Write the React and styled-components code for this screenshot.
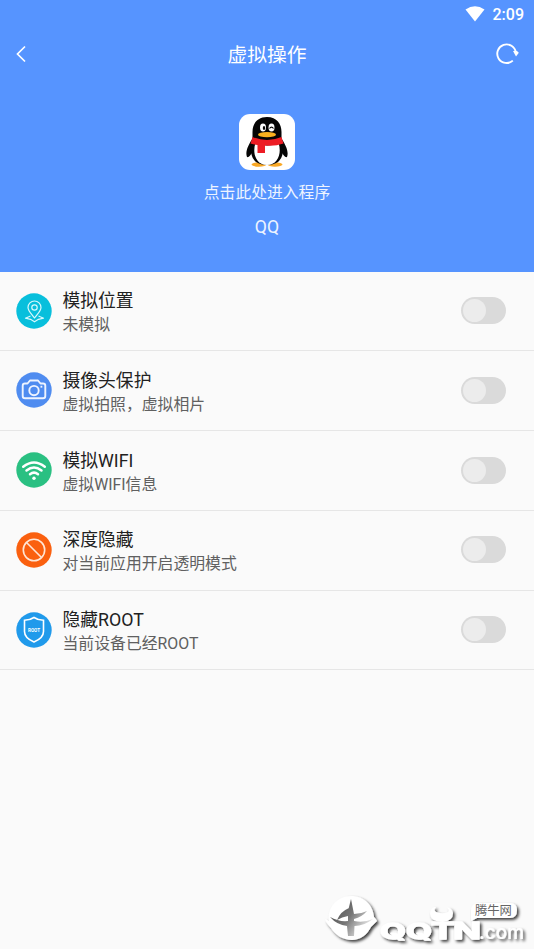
import React from 'react';
import styled, { createGlobalStyle } from 'styled-components';

const GlobalStyle = createGlobalStyle`
  * {
    box-sizing: border-box;
  }

  body {
    margin: 0;
    background: #fafafa;
    font-family: Roboto, 'Noto Sans CJK SC', sans-serif;
  }
`;

const Screen = styled.div`
  position: relative;
  height: 949px;
  overflow: hidden;
  background: #fafafa;
`;

const Header = styled.header`
  height: 271.7px;
  background: #5694ff;
  color: white;
`;

const StatusBar = styled.div`
  display: flex;
  justify-content: flex-end;
  align-items: center;
  gap: 8px;
  height: 27px;
  padding-right: 10px;
`;

const Clock = styled.span`
  font-size: 16px;
  line-height: 27px;
  font-weight: 500;
  padding-top: 1px;
`;

const NavBar = styled.div`
  display: flex;
  justify-content: space-between;
  align-items: center;
  height: 54px;
  padding: 0 14px;
`;

const IconButton = styled.button`
  display: flex;
  width: 26px;
  height: 26px;
  padding: 0;
  border: none;
  background: none;
`;

const Title = styled.h1`
  margin: 0;
  padding-top: 4px;
  font-size: 19.8px;
  line-height: 30px;
  font-weight: 400;
`;

const AppEntry = styled.div`
  display: flex;
  flex-direction: column;
  align-items: center;
  padding-top: 32.5px;
`;

const AppIcon = styled.svg`
  display: block;
  width: 56px;
  height: 56px;
`;

const EntryText = styled.div`
  margin-top: ${(props) => props.$top}px;
  font-size: ${(props) => props.$size}px;
  line-height: 24px;
  color: #eef4ff;
`;

const Row = styled.div`
  display: flex;
  align-items: center;
  height: 79.75px;
  padding: 0 28px 1px 16px;
  border-bottom: 1px solid #e6e6e6;
`;

const RowIcon = styled.svg`
  flex: none;
  width: 36px;
  height: 36px;
`;

const RowText = styled.div`
  flex: 1;
  padding: 4px 0 0 10.5px;
`;

const RowTitle = styled.div`
  font-size: 17.8px;
  line-height: 24px;
  color: #212121;
`;

const RowDetail = styled.div`
  font-size: 15.85px;
  line-height: 23px;
  color: #606060;
`;

const Switch = styled.button`
  display: flex;
  align-items: center;
  width: 45px;
  height: 27px;
  padding: 0 2px;
  border: none;
  border-radius: 14px;
  background: #dadada;
`;

const Knob = styled.span`
  width: 23px;
  height: 23px;
  border-radius: 50%;
  background: #ececec;
`;

const Watermark = styled.svg`
  position: absolute;
  right: 0;
  bottom: 0;
  width: 220px;
  height: 64px;
`;

const Penguin = () => (
  <AppIcon viewBox="0 0 56 56">
    <rect width="56" height="56" rx="11" fill="#fff" />
    <ellipse cx="20" cy="50.5" rx="7.5" ry="2.2" fill="#f9a825" />
    <ellipse cx="36" cy="50.5" rx="7.5" ry="2.2" fill="#f9a825" />
    <path d="M14 24C9 31 6 38 8 43C10 44 13 39 14 37ZM42 24C47 31 50 38 48 43C46 44 43 39 42 37Z" fill="#050505" />
    <path d="M28 3C18 3 13.500 10 13.500 18V25C11 34 11 43 17 48C23 52 33 52 39 48C45 43 45 34 42.500 25V18C42.500 10 38 3 28 3Z" fill="#050505" />
    <path d="M16.500 29Q28 34 39.500 29C43 39 39 51 28 51C17 51 13 39 16.500 29Z" fill="#fff" />
    <ellipse cx="24" cy="13.500" rx="3" ry="4" fill="#fff" />
    <ellipse cx="32.500" cy="13.500" rx="3" ry="4" fill="#fff" />
    <ellipse cx="25" cy="14" rx="1.200" ry="1.900" fill="#050505" />
    <path d="M30.500 14.500Q32.500 11.800 34.500 14.500" fill="none" stroke="#050505" strokeWidth="1.200" />
    <ellipse cx="28" cy="20.700" rx="9" ry="2.600" fill="#f9b01e" />
    <path d="M13.500 23Q28 29 42.500 23L44.500 29.500Q36 32.500 26 31.500V39H18.500V31Q15 30.500 11.500 29.500Z" fill="#ed1c24" />
  </AppIcon>
);

const LocationIcon = () => (
  <RowIcon viewBox="0 0 36 36">
    <circle cx="18" cy="18" r="17.700" fill="#08bfdc" />
    <g fill="none" stroke="#d9f8fc" strokeWidth="1.200" strokeLinejoin="round">
      <path d="M18.500 25C16 21.500 12 18 12 14.500A6.500 6.500 0 0 1 25 14.500C25 18 21 21.500 18.500 25Z" />
      <circle cx="18.500" cy="14.500" r="2.700" />
      <path d="M14.500 23L9.500 25.200L14.500 26.300L18.500 28.800L22.500 26.300L27.500 25.200L22.500 23" />
    </g>
  </RowIcon>
);

const CameraIcon = () => (
  <RowIcon viewBox="0 0 36 36">
    <circle cx="18" cy="18" r="17.700" fill="#4f8cf0" />
    <g fill="none" stroke="#eef4ff" strokeWidth="1.900" strokeLinejoin="round">
      <path d="M9 11.500H11.500L14 8.500H22L24.500 11.500H27Q29.300 11.500 29.300 13.800V24Q29.300 26.300 27 26.300H9Q6.700 26.300 6.700 24V13.800Q6.700 11.500 9 11.500Z" />
      <circle cx="18" cy="18.600" r="4.700" />
      <path d="M24.500 14.700H26.300" />
    </g>
  </RowIcon>
);

const WifiIcon = () => (
  <RowIcon viewBox="0 0 36 36">
    <circle cx="18" cy="18" r="17.700" fill="#2ac082" />
    <g fill="none" stroke="#fff" strokeWidth="2.500" strokeLinecap="round">
      <path d="M7.200 14.700Q18 6.200 28.800 14.700" />
      <path d="M10.500 18.500Q18 12.600 25.500 18.500" />
      <path d="M14 22.200Q18 19.100 22 22.200" />
    </g>
    <circle cx="18" cy="26.200" r="1.700" fill="#fff" />
  </RowIcon>
);

const HiddenIcon = () => (
  <RowIcon viewBox="0 0 36 36">
    <circle cx="18" cy="18" r="17.700" fill="#fa600f" />
    <g fill="none" stroke="#ffe6d5" strokeWidth="1.600">
      <circle cx="18" cy="18" r="10.700" />
      <path d="M10.500 10.500L25.500 25.500" />
    </g>
  </RowIcon>
);

const RootIcon = () => (
  <RowIcon viewBox="0 0 36 36">
    <circle cx="18" cy="18" r="17.700" fill="#209aeb" />
    <path
      d="M18 5.500Q22 8.200 27.500 8.200V19.500Q27.500 26 18 30Q8.500 26 8.500 19.500V8.200Q14 8.200 18 5.500Z"
      fill="none"
      stroke="#fff"
      strokeWidth="1.600"
    />
    <text x="18" y="19.700" fontSize="5" fontWeight="700" fill="#fff" textAnchor="middle" textLength="12" lengthAdjust="spacingAndGlyphs">
      ROOT
    </text>
  </RowIcon>
);

const SiteMark = () => (
  <Watermark viewBox="0 0 220 64">
    <defs>
      <filter id="shade" x="-10%" y="-20%" width="125%" height="150%">
        <feDropShadow dx="2" dy="2" stdDeviation="1.800" floodColor="#000" floodOpacity="0.75" />
      </filter>
      <filter id="soft">
        <feGaussianBlur stdDeviation="0.700" />
      </filter>
      <linearGradient id="hollow" x1="0" y1="0" x2="1" y2="0.600">
        <stop offset="0" stopColor="#444" />
        <stop offset="0.550" stopColor="#777" />
        <stop offset="1" stopColor="#eee" />
      </linearGradient>
    </defs>
    <g filter="url(#shade)" fill="#fff">
      <path d="M37 11C50 11 59 20 60 32Q62 34 63 36Q59 40 57 42C53 50 46 55 38 55C29 55 21 50 17 43Q12 38 11 34L15 36C13 22 24 11 37 11Z" />
      <path
        fillRule="evenodd"
        d="M120 22Q116 24 116 29Q117 37 129 37Q139 36 139 28Q138 23 133 22.500Q136 25 134 27Q129 29.500 122 27Q119 25 122 22Z"
      />
      <g fontFamily="Inter, sans-serif" fontSize="23" fontWeight="700" stroke="#fff" strokeWidth="1.400" strokeLinejoin="round">
        <text x="66" y="54" fontSize="22" textLength="52" lengthAdjust="spacingAndGlyphs">
          QQ
        </text>
        <text x="117" y="54" textLength="24" lengthAdjust="spacingAndGlyphs">
          T
        </text>
        <text x="139" y="54" textLength="28" lengthAdjust="spacingAndGlyphs">
          N
        </text>
      </g>
      <text x="165" y="54" fontFamily="Inter, sans-serif" fontSize="19" fontWeight="500" textLength="45" lengthAdjust="spacingAndGlyphs">
        .com
      </text>
      <path d="M165 18H196Q203 18 203 25Q203 33 196 33H163L157 36V26Q157 18 165 18Z" />
    </g>
    <path
      filter="url(#soft)"
      fill="url(#hollow)"
      d="M37 14L40 29Q47 29 53 26Q48 32 40 34V36Q50 38 59 34Q50 41 40.500 41L40 51H34L33 41Q23 40 16 32Q25 37 34 36V31Q28 32 23 35Q27 26 35 23L33.500 28Z"
    />
    <text x="161" y="30" fontFamily="'Noto Sans CJK SC', sans-serif" fontSize="12.300" fill="#666">
      腾牛网
    </text>
  </Watermark>
);

const items = [
  { title: '模拟位置', detail: '未模拟', Icon: LocationIcon },
  { title: '摄像头保护', detail: '虚拟拍照，虚拟相片', Icon: CameraIcon },
  { title: '模拟WIFI', detail: '虚拟WIFI信息', Icon: WifiIcon },
  { title: '深度隐藏', detail: '对当前应用开启透明模式', Icon: HiddenIcon },
  { title: '隐藏ROOT', detail: '当前设备已经ROOT', Icon: RootIcon },
];

const App = () => (
  <>
    <GlobalStyle />
    <Screen>
      <Header>
        <StatusBar>
          <svg width="20" height="16" viewBox="0 0 20 16">
            <path d="M0.500 3.500Q10 -3 19.500 3.500L10 15.500Z" fill="#fff" />
          </svg>
          <Clock>2:09</Clock>
        </StatusBar>
        <NavBar>
          <IconButton>
            <svg width="26" height="26" viewBox="0 0 26 26">
              <path d="M11 5.500L3.500 13L11 20.500" fill="none" stroke="#fff" strokeWidth="1.700" />
            </svg>
          </IconButton>
          <Title>虚拟操作</Title>
          <IconButton>
            <svg width="26" height="26" viewBox="0 0 26 26">
              <path d="M18.800 19.600A9.300 9.300 0 1 1 21.800 11.500" fill="none" stroke="#fff" strokeWidth="1.900" />
              <path d="M19 10H23L24.800 11.800L22 15.500Z" fill="#fff" />
            </svg>
          </IconButton>
        </NavBar>
        <AppEntry>
          <Penguin />
          <EntryText $top={11.5} $size={15.8}>点击此处进入程序</EntryText>
          <EntryText $top={10} $size={17.7}>QQ</EntryText>
        </AppEntry>
      </Header>
      {items.map(({ title, detail, Icon }) => (
        <Row key={title}>
          <Icon />
          <RowText>
            <RowTitle>{title}</RowTitle>
            <RowDetail>{detail}</RowDetail>
          </RowText>
          <Switch>
            <Knob />
          </Switch>
        </Row>
      ))}
      <SiteMark />
    </Screen>
  </>
);

export default App;
